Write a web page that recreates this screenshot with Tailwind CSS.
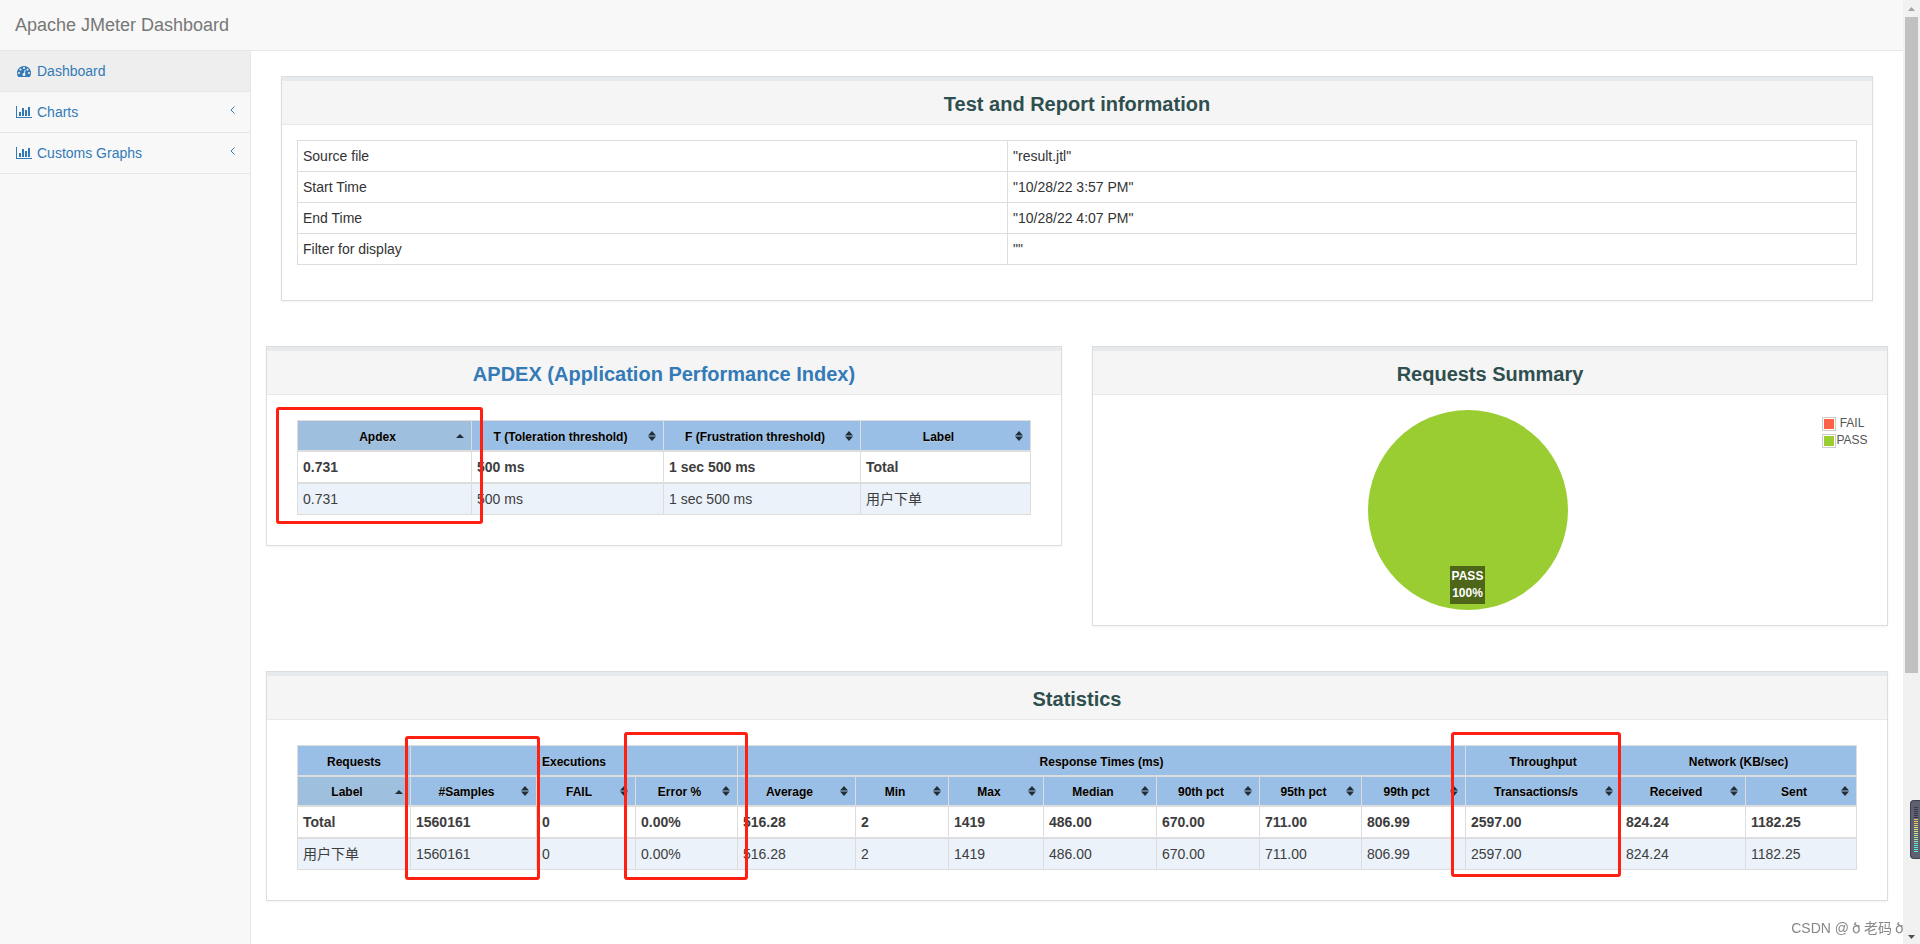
<!DOCTYPE html>
<html lang="en">
<head>
  <meta charset="UTF-8">
  <meta name="viewport" content="width=device-width, initial-scale=1.0">
  <title>Apache JMeter Dashboard</title>
  <script src="https://cdn.jsdelivr.net/npm/@tailwindcss/browser@4"></script>
</head>
<body class="min-h-screen bg-white pr-[17px] font-['Liberation_Sans','Noto_Sans_CJK_SC',sans-serif] text-sm leading-5 text-[#333]">
  <!-- sprites -->
  <svg class="hidden">
    <symbol id="sort-both" viewBox="0 0 8 10"><path d="M4 0L8 4.500H0zM0 5.500h8L4 10z" fill="#222d35"/></symbol>
    <symbol id="sort-asc" viewBox="0 0 8 4"><path d="M4 0L8 4H0z" fill="#222d35"/></symbol>
    <symbol id="bar-chart" viewBox="0 0 2048 1792"><path fill="currentColor" d="M640 896v512H384V896h256zm384-512v1024H768V384h256zm1024 1152v128H0V128h128v1408h1920zm-640-896v768h-256V640h256zm384-384v1152h-256V256h256z"/></symbol>
    <symbol id="tachometer" viewBox="0 0 1792 1792"><path fill="currentColor" d="M384 1152q0-53-37.500-90.500t-90.500-37.500-90.500 37.500-37.500 90.500 37.500 90.500 90.500 37.500 90.500-37.500 37.500-90.500zm192-448q0-53-37.500-90.500t-90.500-37.500-90.500 37.500-37.500 90.500 37.500 90.500 90.500 37.500 90.500-37.500 37.500-90.500zm428 481l101-382q6-26-7.500-48.500t-38.500-29.500-48 6.500-30 39.500l-101 382q-60 5-107 43.500t-63 98.500q-20 77 20 146t117 89 146-20 89-117q16-60-6-117t-72-91zm660-33q0-53-37.500-90.500t-90.500-37.500-90.500 37.500-37.500 90.500 37.500 90.500 90.500 37.500 90.500-37.500 37.500-90.500zm-640-640q0-53-37.500-90.500t-90.500-37.500-90.500 37.500-37.500 90.500 37.500 90.500 90.500 37.500 90.500-37.500 37.500-90.500zm448 192q0-53-37.500-90.500t-90.500-37.500-90.500 37.500-37.500 90.500 37.500 90.500 90.500 37.500 90.500-37.500 37.500-90.500zm320 448q0 261-141 483-19 29-54 29H195q-35 0-54-29Q0 1414 0 1152q0-182 71-348t191-286 286-191 348-71 348 71 286 191 191 286 71 348z"/></symbol>
  </svg>

  <div class="flex min-h-screen flex-col">
    <header class="flex h-[51px] items-center border-b border-[#e7e7e7] bg-[#f8f8f8] px-[15px]">
      <a href="#" class="pb-px text-lg leading-5 text-[#777]">Apache JMeter Dashboard</a>
    </header>

    <div class="flex flex-1">
      <nav class="w-[251px] shrink-0 border-r border-[#e7e7e7] bg-[#f8f8f8]">
        <ul class="text-[#337ab7]">
          <li class="border-b border-[#e7e7e7]">
            <a href="#" class="flex h-10 items-center gap-[5px] bg-[#eee] px-4">
              <svg class="h-[14px] w-4"><use href="#tachometer"/></svg>Dashboard
            </a>
          </li>
          <li class="border-b border-[#e7e7e7]">
            <a href="#" class="flex h-10 items-center gap-[5px] pr-[15px] pl-4">
              <svg class="h-[14px] w-4"><use href="#bar-chart"/></svg>Charts
              <svg class="mb-[5px] ml-auto h-2 w-[5px]" viewBox="0 0 5 8"><path d="M4.500 .5L1 4l3.500 3.500" fill="none" stroke="currentColor"/></svg>
            </a>
          </li>
          <li class="border-b border-[#e7e7e7]">
            <a href="#" class="flex h-10 items-center gap-[5px] pr-[15px] pl-4">
              <svg class="h-[14px] w-4"><use href="#bar-chart"/></svg>Customs Graphs
              <svg class="mb-[5px] ml-auto h-2 w-[5px]" viewBox="0 0 5 8"><path d="M4.500 .5L1 4l3.500 3.500" fill="none" stroke="currentColor"/></svg>
            </a>
          </li>
        </ul>
      </nav>

      <main class="flex min-w-0 flex-1 flex-col gap-[45px] px-[15px] pt-[25px] pb-[43px]">
        <section class="mx-[15px] border border-[#ddd] shadow-xs">
          <h2 class="flex h-12 items-center justify-center border-t-4 border-b border-[#e7eaec] bg-[#f5f5f5] pt-[2px] text-xl font-bold text-[#2f4f4f]">Test and Report information</h2>
          <div class="px-[15px] pt-[15px] pb-[35px]">
            <table class="w-full border-collapse">
              <tbody>
                <tr><td class="w-[710px] border border-[#ddd] p-[5px]">Source file</td><td class="w-[849px] border border-[#ddd] p-[5px]">"result.jtl"</td></tr>
                <tr><td class="border border-[#ddd] p-[5px]">Start Time</td><td class="border border-[#ddd] p-[5px]">"10/28/22 3:57 PM"</td></tr>
                <tr><td class="border border-[#ddd] p-[5px]">End Time</td><td class="border border-[#ddd] p-[5px]">"10/28/22 4:07 PM"</td></tr>
                <tr><td class="border border-[#ddd] p-[5px]">Filter for display</td><td class="border border-[#ddd] p-[5px]">""</td></tr>
              </tbody>
            </table>
          </div>
        </section>

        <div class="grid grid-cols-2 items-start gap-[30px]">
          <section class="border border-[#ddd] shadow-xs">
            <h2 class="flex h-12 items-center justify-center border-t-4 border-b border-[#e7eaec] bg-[#f5f5f5] pt-[2px] text-xl font-bold">
              <a href="#" class="text-[#337ab7]">APDEX (Application Performance Index)</a>
            </h2>
            <div class="relative px-[30px] pt-[25px] pb-[30px]">
              <table class="w-full border-separate border-spacing-0 border-t border-l border-[#ddd] text-[#3d3d3d] [&_td]:border-r [&_td]:border-b [&_td]:border-[#ddd] [&_td]:p-[5px] [&_th]:relative [&_th]:border-r [&_th]:border-b-2 [&_th]:border-[#ddd] [&_th]:bg-[#99bfe6] [&_th]:pt-[2px] [&_th]:pr-5 [&_th]:pl-[6px] [&_th]:text-xs [&_th]:text-black [&_th]:text-shadow-[0_1px_0_rgb(204_204_204/0.7)] [&_th_svg]:absolute [&_th_svg]:right-[7px]">
                <thead>
                  <tr class="h-[31px]">
                    <th class="w-[174px] bg-[#9fbfdf]!">Apdex<svg class="top-[13px] h-1 w-2"><use href="#sort-asc"/></svg></th>
                    <th class="w-[192px]">T (Toleration threshold)<svg class="top-[10px] h-[10px] w-2"><use href="#sort-both"/></svg></th>
                    <th class="w-[197px]">F (Frustration threshold)<svg class="top-[10px] h-[10px] w-2"><use href="#sort-both"/></svg></th>
                    <th class="w-[170px]">Label<svg class="top-[10px] h-[10px] w-2"><use href="#sort-both"/></svg></th>
                  </tr>
                </thead>
                <tbody>
                  <tr class="font-bold [&>td]:border-b-2"><td>0.731</td><td>500 ms</td><td>1 sec 500 ms</td><td>Total</td></tr>
                  <tr class="bg-[#ebf2fa]"><td>0.731</td><td>500 ms</td><td>1 sec 500 ms</td><td>用户下单</td></tr>
                </tbody>
              </table>
              <div class="absolute top-3 left-[9px] h-[117px] w-[207px] rounded-[3px] border-3 border-[#ff2012]"></div>
            </div>
          </section>

          <section class="border border-[#ddd] shadow-xs">
            <h2 class="flex h-12 items-center justify-center border-t-4 border-b border-[#e7eaec] bg-[#f5f5f5] pt-[2px] text-xl font-bold text-[#2f4f4f]">Requests Summary</h2>
            <div class="flex items-start p-[15px]">
              <div class="flex flex-1 justify-center pl-[5px]">
                <div class="flex h-[200px] w-[200px] items-end justify-center rounded-full bg-[#9acd32] pb-[6px]">
                  <div class="bg-black/50 p-[2px] text-center text-xs leading-[17px] font-bold text-white">PASS<br>100%</div>
                </div>
              </div>
              <ul class="mt-[7px] mr-1 text-xs leading-[17px] text-[#545454]">
                <li class="flex"><span class="h-[14px] w-[14px] border border-[#ccc] bg-[#ff6347] bg-clip-content p-px"></span><span class="-mt-[2px] w-8 text-center">FAIL</span></li>
                <li class="mt-[2px] flex"><span class="h-[14px] w-[14px] border border-[#ccc] bg-[#9acd32] bg-clip-content p-px"></span><span class="-mt-[2px] w-8 text-center">PASS</span></li>
              </ul>
            </div>
          </section>
        </div>

        <section class="border border-[#ddd] shadow-xs">
          <h2 class="flex h-12 items-center justify-center border-t-4 border-b border-[#e7eaec] bg-[#f5f5f5] pt-[2px] text-xl font-bold text-[#2f4f4f]">Statistics</h2>
          <div class="relative px-[30px] pt-[25px] pb-[30px]">
            <table class="w-full border-separate border-spacing-0 border-t border-l border-[#ddd] text-[#3d3d3d] [&_td]:border-r [&_td]:border-b [&_td]:border-[#ddd] [&_td]:p-[5px] [&_th]:relative [&_th]:border-r [&_th]:border-b-2 [&_th]:border-[#ddd] [&_th]:bg-[#99bfe6] [&_th]:pt-[2px] [&_th]:text-xs [&_th]:text-black [&_th]:text-shadow-[0_1px_0_rgb(204_204_204/0.7)] [&_th_svg]:absolute [&_th_svg]:right-[7px]">
              <colgroup>
                <col class="w-[113px]"><col class="w-[126px]"><col class="w-[99px]"><col class="w-[102px]"><col class="w-[118px]"><col class="w-[93px]"><col class="w-[95px]"><col class="w-[113px]"><col class="w-[103px]"><col class="w-[102px]"><col class="w-[104px]"><col class="w-[155px]"><col class="w-[125px]"><col class="w-[111px]">
              </colgroup>
              <thead>
                <tr class="h-[31px]">
                  <th>Requests</th>
                  <th colspan="3">Executions</th>
                  <th colspan="7">Response Times (ms)</th>
                  <th>Throughput</th>
                  <th colspan="2">Network (KB/sec)</th>
                </tr>
                <tr class="h-[30px] [&>th]:pr-5 [&>th]:pl-[6px]">
                  <th class="bg-[#9fbfdf]!">Label<svg class="top-[13px] h-1 w-2"><use href="#sort-asc"/></svg></th>
                  <th>#Samples<svg class="top-[9px] h-[10px] w-2"><use href="#sort-both"/></svg></th>
                  <th>FAIL<svg class="top-[9px] h-[10px] w-2"><use href="#sort-both"/></svg></th>
                  <th>Error %<svg class="top-[9px] h-[10px] w-2"><use href="#sort-both"/></svg></th>
                  <th>Average<svg class="top-[9px] h-[10px] w-2"><use href="#sort-both"/></svg></th>
                  <th>Min<svg class="top-[9px] h-[10px] w-2"><use href="#sort-both"/></svg></th>
                  <th>Max<svg class="top-[9px] h-[10px] w-2"><use href="#sort-both"/></svg></th>
                  <th>Median<svg class="top-[9px] h-[10px] w-2"><use href="#sort-both"/></svg></th>
                  <th>90th pct<svg class="top-[9px] h-[10px] w-2"><use href="#sort-both"/></svg></th>
                  <th>95th pct<svg class="top-[9px] h-[10px] w-2"><use href="#sort-both"/></svg></th>
                  <th>99th pct<svg class="top-[9px] h-[10px] w-2"><use href="#sort-both"/></svg></th>
                  <th>Transactions/s<svg class="top-[9px] h-[10px] w-2"><use href="#sort-both"/></svg></th>
                  <th>Received<svg class="top-[9px] h-[10px] w-2"><use href="#sort-both"/></svg></th>
                  <th>Sent<svg class="top-[9px] h-[10px] w-2"><use href="#sort-both"/></svg></th>
                </tr>
              </thead>
              <tbody>
                <tr class="font-bold [&>td]:border-b-2">
                  <td>Total</td><td>1560161</td><td>0</td><td>0.00%</td><td>516.28</td><td>2</td><td>1419</td><td>486.00</td><td>670.00</td><td>711.00</td><td>806.99</td><td>2597.00</td><td>824.24</td><td>1182.25</td>
                </tr>
                <tr class="bg-[#ebf2fa]">
                  <td>用户下单</td><td>1560161</td><td>0</td><td>0.00%</td><td>516.28</td><td>2</td><td>1419</td><td>486.00</td><td>670.00</td><td>711.00</td><td>806.99</td><td>2597.00</td><td>824.24</td><td>1182.25</td>
                </tr>
              </tbody>
            </table>
            <div class="absolute top-4 left-[138px] h-[144px] w-[135px] rounded-[3px] border-3 border-[#ff2012]"></div>
            <div class="absolute top-3 left-[357px] h-[148px] w-[124px] rounded-[3px] border-3 border-[#ff2012]"></div>
            <div class="absolute top-3 right-[266px] h-[145px] w-[170px] rounded-[3px] border-3 border-[#ff2012]"></div>
          </div>
        </section>
      </main>
    </div>
  </div>

  <!-- scrollbar -->
  <div class="fixed inset-y-0 right-0 flex w-[17px] flex-col items-center bg-[#f1f1f1]">
    <svg class="my-[7px] h-1 w-[7px] shrink-0" viewBox="0 0 7 4"><path d="M3.500 0L7 4H0z" fill="#a3a3a3"/></svg>
    <div class="-mt-px h-[656px] w-[13px] bg-[#c1c1c1]"></div>
    <svg class="mt-auto mb-[5px] h-1 w-[7px] shrink-0" viewBox="0 0 7 4"><path d="M0 0h7L3.500 4z" fill="#505050"/></svg>
  </div>

  <!-- level meter docked to the window edge -->
  <div class="fixed right-0 bottom-[85px] flex h-[59px] w-[10px] items-center justify-end rounded-l-sm border border-r-0 border-[#3f424d] bg-[#5c6070] pr-[2px]">
    <svg class="h-[45px] w-1" viewBox="0 0 4 45" stroke-width="4" stroke-dasharray="1 1" shape-rendering="crispEdges">
      <path d="M2 0v12" stroke="#363943"/>
      <path d="M2 12v8" stroke="#f0c465"/>
      <path d="M2 20v8" stroke="#e2e577"/>
      <path d="M2 28v8" stroke="#a8ea96"/>
      <path d="M2 36v9" stroke="#62e8cc"/>
    </svg>
  </div>

  <p class="fixed right-4 bottom-[6px] flex gap-[3px] text-sm text-[#888]"><span>CSDN @</span><span>ծ</span><span>老码</span><span>ծ</span></p>
</body>
</html>
